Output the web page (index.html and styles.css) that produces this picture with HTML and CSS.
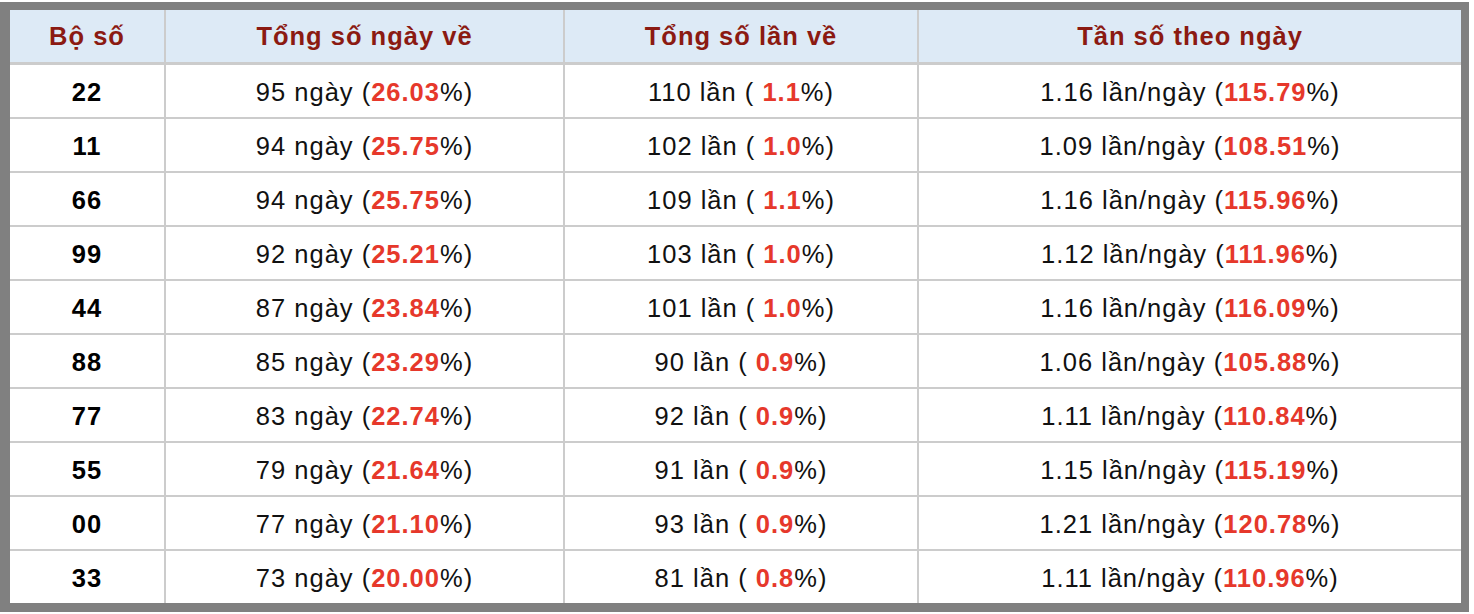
FILE: index.html
```html
<!DOCTYPE html>
<html lang="vi">
<head>
<meta charset="utf-8">
<title>Thống kê bộ số</title>
<link rel="stylesheet" href="styles.css">
</head>
<body>
<div class="frame">
  <div class="grid">
    <div class="cell head">Bộ số</div>
    <div class="cell head">Tổng số ngày về</div>
    <div class="cell head">Tổng số lần về</div>
    <div class="cell head">Tần số theo ngày</div>

    <div class="cell num">22</div>
    <div class="cell">95 ngày (<b class="red">26.03</b>%)</div>
    <div class="cell">110 lần ( <b class="red">1.1</b>%)</div>
    <div class="cell">1.16 lần/ngày (<b class="red">115.79</b>%)</div>

    <div class="cell num">11</div>
    <div class="cell">94 ngày (<b class="red">25.75</b>%)</div>
    <div class="cell">102 lần ( <b class="red">1.0</b>%)</div>
    <div class="cell">1.09 lần/ngày (<b class="red">108.51</b>%)</div>

    <div class="cell num">66</div>
    <div class="cell">94 ngày (<b class="red">25.75</b>%)</div>
    <div class="cell">109 lần ( <b class="red">1.1</b>%)</div>
    <div class="cell">1.16 lần/ngày (<b class="red">115.96</b>%)</div>

    <div class="cell num">99</div>
    <div class="cell">92 ngày (<b class="red">25.21</b>%)</div>
    <div class="cell">103 lần ( <b class="red">1.0</b>%)</div>
    <div class="cell">1.12 lần/ngày (<b class="red">111.96</b>%)</div>

    <div class="cell num">44</div>
    <div class="cell">87 ngày (<b class="red">23.84</b>%)</div>
    <div class="cell">101 lần ( <b class="red">1.0</b>%)</div>
    <div class="cell">1.16 lần/ngày (<b class="red">116.09</b>%)</div>

    <div class="cell num">88</div>
    <div class="cell">85 ngày (<b class="red">23.29</b>%)</div>
    <div class="cell">90 lần ( <b class="red">0.9</b>%)</div>
    <div class="cell">1.06 lần/ngày (<b class="red">105.88</b>%)</div>

    <div class="cell num">77</div>
    <div class="cell">83 ngày (<b class="red">22.74</b>%)</div>
    <div class="cell">92 lần ( <b class="red">0.9</b>%)</div>
    <div class="cell">1.11 lần/ngày (<b class="red">110.84</b>%)</div>

    <div class="cell num">55</div>
    <div class="cell">79 ngày (<b class="red">21.64</b>%)</div>
    <div class="cell">91 lần ( <b class="red">0.9</b>%)</div>
    <div class="cell">1.15 lần/ngày (<b class="red">115.19</b>%)</div>

    <div class="cell num">00</div>
    <div class="cell">77 ngày (<b class="red">21.10</b>%)</div>
    <div class="cell">93 lần ( <b class="red">0.9</b>%)</div>
    <div class="cell">1.21 lần/ngày (<b class="red">120.78</b>%)</div>

    <div class="cell num">33</div>
    <div class="cell">73 ngày (<b class="red">20.00</b>%)</div>
    <div class="cell">81 lần ( <b class="red">0.8</b>%)</div>
    <div class="cell">1.11 lần/ngày (<b class="red">110.96</b>%)</div>
  </div>
</div>
</body>
</html>
```
FILE: styles.css
```css
html, body {
  margin: 0;
  padding: 0;
  background: #ffffff;
}

body {
  padding-top: 2px;
  font-family: "Liberation Sans", Arial, Helvetica, sans-serif;
  color: #111111;
}

.frame {
  width: 1451px;
  border-style: solid;
  border-color: #808080;
  border-width: 8px 8px 9px 10px;
}

.grid {
  display: grid;
  grid-template-columns: 154px 397px 352px 542px;
  column-gap: 2px;
  row-gap: 2px;
  background: #cccccc;
}

.cell {
  height: 52px;
  box-sizing: border-box;
  padding-top: 3px;
  display: flex;
  align-items: center;
  justify-content: center;
  background: #ffffff;
  font-size: 25.5px;
  letter-spacing: 1px;
  white-space: pre;
}

.head {
  padding-top: 0;
  margin-bottom: 1px;
  background: #ddeaf6;
  color: #8b1a12;
  font-weight: bold;
}

.num {
  font-weight: bold;
  color: #000000;
}

.red {
  color: #e6382b;
  font-weight: bold;
}
```
